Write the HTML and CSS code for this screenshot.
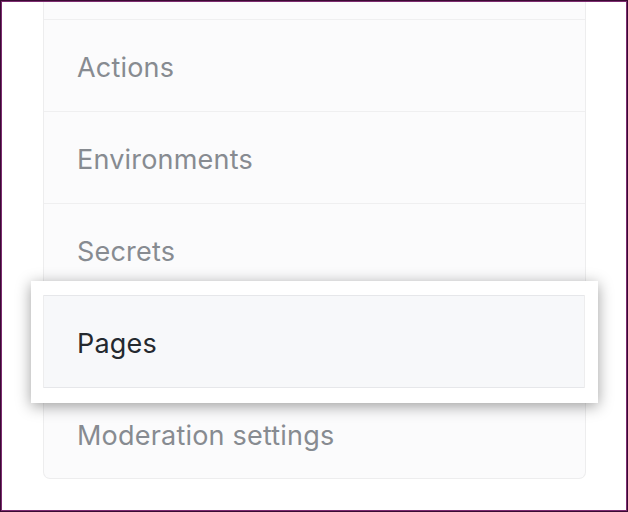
FILE: index.html
```html
<!DOCTYPE html>
<html>
<head>
<meta charset="utf-8">
<link rel="stylesheet" href="styles.css">
</head>
<body>
<div class="frame">
  <div class="card">
    <div class="spacer"></div>
    <div class="row">Actions</div>
    <div class="row">Environments</div>
    <div class="row">Secrets</div>
    <div class="row">Pages</div>
    <div class="row last">Moderation settings</div>
  </div>
  <div class="zoombox">
    <div class="zoomcard">
      <div class="row active">Pages</div>
    </div>
  </div>
</div>
</body>
</html>
```

FILE: styles.css
```css
html, body {
  margin: 0;
  padding: 0;
  background: #ffffff;
}
.frame {
  position: relative;
  width: 628px;
  height: 512px;
  box-sizing: border-box;
  border: 1px solid #3a0a33;
  box-shadow: inset 0 0 0 1px #7d2c70;
  background: #ffffff;
  padding-left: 42px;
  padding-top: 1px;
  overflow: hidden;
  font-family: "Inter", "Liberation Sans", Arial, sans-serif;
}
.card {
  width: 543px;
  box-sizing: border-box;
  border: 1px solid #ededee;
  border-top: none;
  border-radius: 0 0 7px 7px;
  background: #fbfbfc;
  display: flex;
  flex-direction: column;
}
.spacer {
  height: 17px;
}
.row {
  height: 92px;
  box-sizing: border-box;
  border-top: 1px solid #efeff0;
  display: flex;
  align-items: center;
  padding-left: 33px;
  padding-top: 3px;
  font-size: 27px;
  letter-spacing: 0.2px;
  color: #878b91;
}
.row.last {
  height: 91px;
  padding-top: 4px;
}
.zoombox {
  position: absolute;
  left: 30px;
  top: 280px;
  width: 567px;
  height: 122px;
  box-sizing: border-box;
  background: #ffffff;
  padding: 14px 13px 15px 12px;
  box-shadow: 0 3px 14px rgba(0, 0, 0, 0.38);
}
.zoomcard {
  height: 100%;
  box-sizing: border-box;
  border-left: 1px solid #ededee;
  border-right: 1px solid #ededee;
  background: #f7f8fa;
}
.row.active {
  color: #24292f;
  border-bottom: 1px solid #e6e7ea;
  border-top: 1px solid #e6e7ea;
  height: 93px;
  padding-left: 33px;
}
```
